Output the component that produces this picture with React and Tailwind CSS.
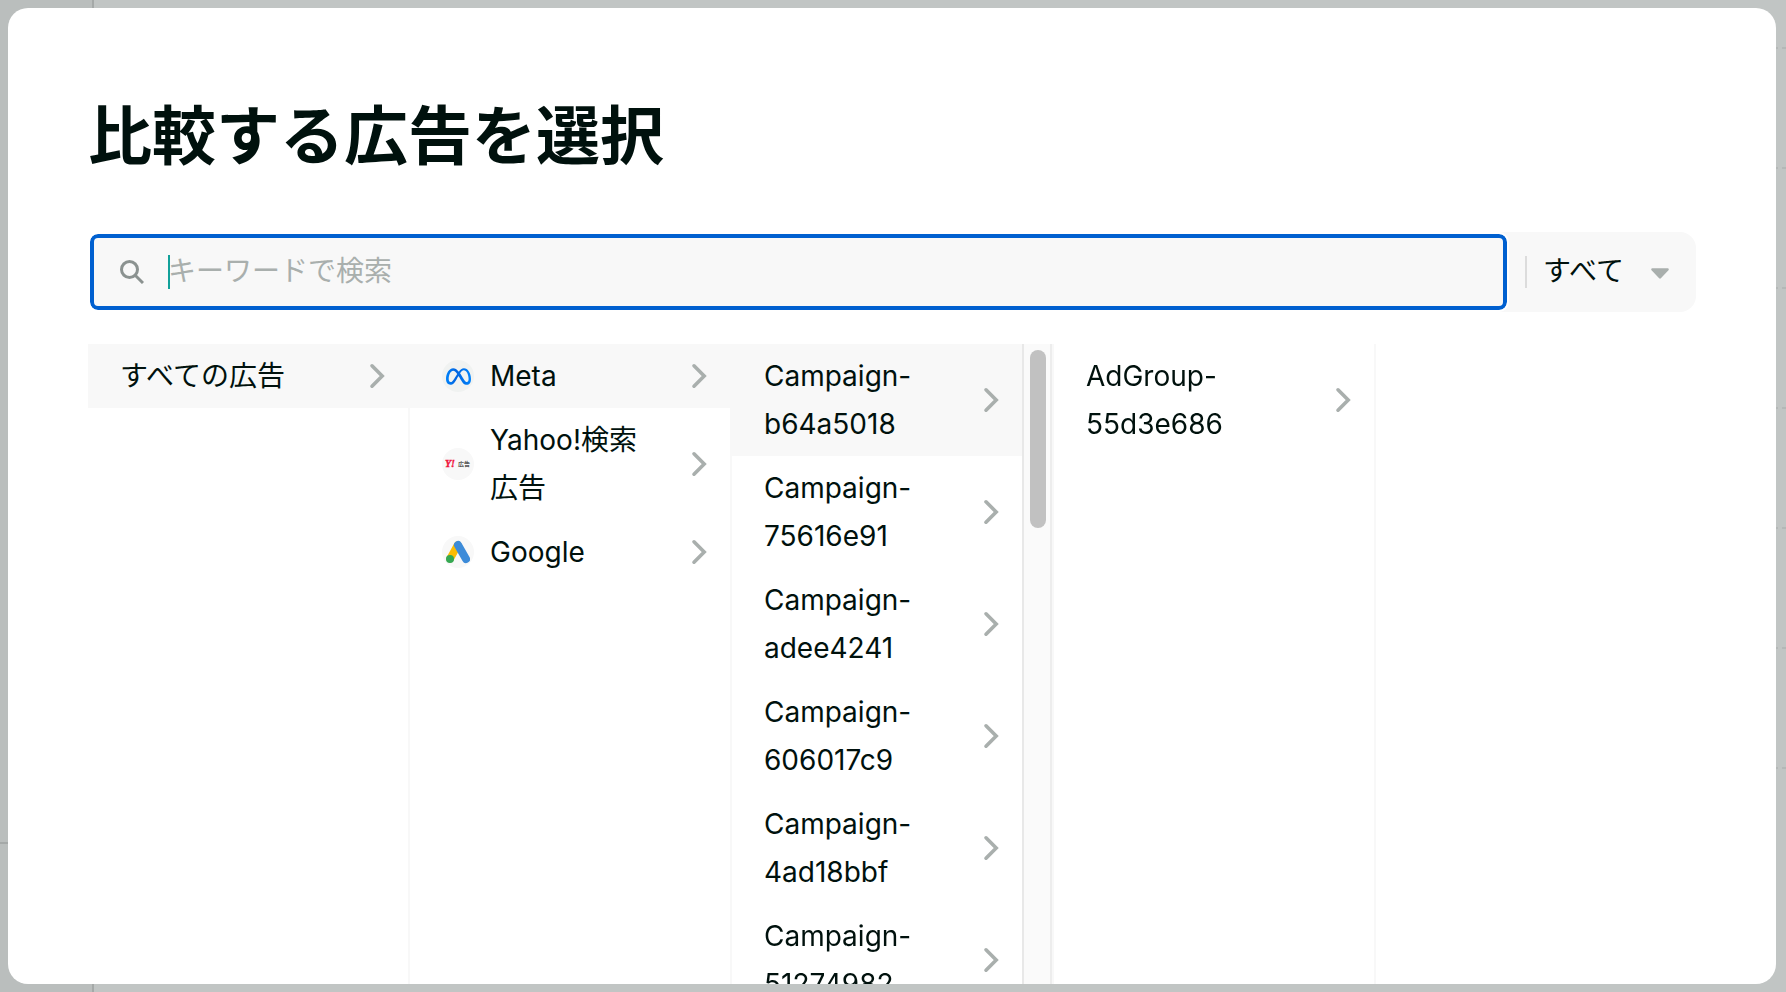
import { useState } from 'react';
import { FaMeta } from 'react-icons/fa6';

const MetaIcon = () => (
  <>
    <svg width="0" height="0" className="absolute" aria-hidden="true">
      <defs>
        <linearGradient id="meta-blue" x1="0" y1="0" x2="1" y2="0">
          <stop offset="0" stopColor="#0082fb" />
          <stop offset="0.4" stopColor="#0064e0" />
          <stop offset="1" stopColor="#0082fb" />
        </linearGradient>
      </defs>
    </svg>
    <FaMeta size={25} fill="url(#meta-blue)" />
  </>
);

const YahooIcon = () => (
  <svg width="32" height="32" viewBox="0 0 32 32" aria-hidden="true">
    <text x="3" y="19" fontSize="10" fontWeight="700" fontStyle="italic" fill="#f0123c" stroke="#f0123c" strokeWidth="0.4" className="font-['Liberation_Serif',serif]">Y!</text>
    <text x="16" y="18" fontSize="6" fontWeight="700" fill="#555555" className="font-['Noto_Sans_CJK_JP',sans-serif]">広告</text>
  </svg>
);

const GoogleAdsIcon = () => (
  <svg width="24" height="24" viewBox="0 0 24 24" fill="none" strokeLinecap="round" aria-hidden="true">
    <path d="M11.6 5.2L4.2 18.6" stroke="#fbbc04" strokeWidth="7.6" />
    <path d="M12 5L20 19" stroke="#3c8bd9" strokeWidth="8" />
    <circle cx="4" cy="19" r="4" fill="#34a853" />
  </svg>
);

const SearchIcon = () => (
  <svg width="24" height="24" viewBox="0 0 24 24" fill="none" stroke="#8b9290" strokeWidth="3" className="shrink-0" aria-hidden="true">
    <circle cx="9.5" cy="9.5" r="8" />
    <path d="M15.2 15.2L23 23" />
  </svg>
);

const Chevron = () => (
  <svg width="28" height="28" viewBox="0 0 28 28" fill="none" stroke="#a9afad" strokeWidth="3.6" strokeLinecap="round" className="shrink-0" aria-hidden="true">
    <path d="M8 3.8L18.2 14L8 24.2" />
  </svg>
);

const media = [
  { id: 'meta', name: 'Meta', icon: <MetaIcon />, iconBg: 'bg-[#f0f2f1]' },
  { id: 'yahoo', name: 'Yahoo!検索広告', icon: <YahooIcon />, iconBg: 'bg-[#f8f8f8]' },
  { id: 'google', name: 'Google', icon: <GoogleAdsIcon />, iconBg: 'bg-[#f8f8f8]' },
];

const campaigns = [
  'Campaign-b64a5018',
  'Campaign-75616e91',
  'Campaign-adee4241',
  'Campaign-606017c9',
  'Campaign-4ad18bbf',
  'Campaign-51274982',
];

const gridLines = [0, 1, 2, 3, 4, 5, 6];

const Item = ({ label, icon, iconBg, selected, onClick }) => (
  <li>
    <button
      type="button"
      onClick={onClick}
      className={`flex w-full items-center py-2 pr-4 pl-8 text-left ${selected ? 'bg-[#f8f8f8]' : ''}`}
    >
      {icon && (
        <span className={`mr-4 flex size-8 shrink-0 items-center justify-center rounded-full ${iconBg}`}>{icon}</span>
      )}
      <span className="mr-8 min-w-0 flex-1">{label}</span>
      <Chevron />
    </button>
  </li>
);

const Column = ({ children }) => (
  <ul className="w-[322px] shrink-0 border-r-2 border-[#f8f8f8]">{children}</ul>
);

// Page behind the dialog
const Backdrop = () => (
  <div className="flex min-h-screen bg-[#c1c5c4]" aria-hidden="true">
    <div className="flex w-[94px] flex-col justify-end border-r-2 border-[#a5a9a8] bg-[#babebd]">
      <div className="h-[150px] border-t-2 border-[#a5a9a8]" />
    </div>
    <div className="flex-1 pt-[47px]">
      {gridLines.map((n) => (
        <div key={n} className="mb-[118px] h-0.5 bg-[repeating-linear-gradient(90deg,#b4b8b7_0_4px,transparent_4px_8px)] last:mb-0" />
      ))}
    </div>
  </div>
);

const App = () => {
  const [keyword, setKeyword] = useState('');
  const [medium, setMedium] = useState('meta');
  const [campaign, setCampaign] = useState(campaigns[0]);

  return (
    <div className="relative font-[Inter,'Noto_Sans_CJK_JP',sans-serif] text-[28px] leading-[48px] text-[#00110d]" lang="ja">
      <Backdrop />

      <div
        role="dialog"
        aria-labelledby="dialog-title"
        className="fixed inset-y-2 right-2.5 left-2 flex flex-col overflow-hidden rounded-[20px] bg-white px-20 pt-20"
      >
        <h1 id="dialog-title" className="mb-12 text-[64px] leading-[96px] font-bold">比較する広告を選択</h1>

        {/* Search */}
        <div className="mb-8 flex h-20 shrink-0 items-center rounded-2xl bg-[#f8f8f8]">
          <label className="m-0.5 flex flex-1 items-center gap-6 self-stretch rounded-lg border-4 border-[#0060d0] pl-[26px] outline-2 outline-white">
            <SearchIcon />
            <span className="relative flex flex-1">
              <input
                type="text"
                value={keyword}
                onChange={(e) => setKeyword(e.target.value)}
                placeholder="キーワードで検索"
                aria-label="キーワードで検索"
                className="w-full bg-transparent pb-0.5 caret-[#12a19a] outline-none placeholder:text-[#a9afad]"
              />
              {!keyword && <span className="absolute top-2 left-0 h-[34px] w-0.5 bg-[#12a19a]" />}
            </span>
          </label>
          <div className="mr-4 ml-4 h-8 w-0.5 bg-[#dcdcdc]" />
          <div className="relative mr-6 flex items-center">
            <select aria-label="検索対象" defaultValue="all" className="w-[129px] appearance-none bg-transparent pb-0.5 outline-none">
              <option value="all">すべて</option>
            </select>
            <svg width="20" height="16" viewBox="0 0 20 16" className="pointer-events-none absolute right-[2px]" aria-hidden="true">
              <path d="M2.4 5.4H17.6L10 13.4Z" fill="#a9afad" stroke="#a9afad" strokeWidth="2.4" strokeLinejoin="round" />
            </svg>
          </div>
        </div>

        {/* Drill-down columns */}
        <div className="flex min-h-0 flex-1">
          <Column>
            <Item label="すべての広告" selected />
          </Column>
          <Column>
            {media.map((m) => (
              <Item
                key={m.id}
                label={m.name}
                icon={m.icon}
                iconBg={m.iconBg}
                selected={m.id === medium}
                onClick={() => setMedium(m.id)}
              />
            ))}
          </Column>
          <div className="flex w-[322px] shrink-0 border-r-2 border-[#f8f8f8]">
            <ul className="flex-1 overflow-y-auto [scrollbar-width:none]">
              {campaigns.map((name) => (
                <Item key={name} label={name} selected={name === campaign} onClick={() => setCampaign(name)} />
              ))}
            </ul>
            <div className="w-[30px] border-x-2 border-r-[#ededed] border-l-[#e8e8e8] bg-[#fafafa] px-1.5 pt-1.5 pr-1">
              <div className="h-[178px] w-4 rounded-full bg-[#c1c1c1]" />
            </div>
          </div>
          <Column>
            <Item label="AdGroup-55d3e686" />
          </Column>
        </div>
      </div>
    </div>
  );
};

export default App;
